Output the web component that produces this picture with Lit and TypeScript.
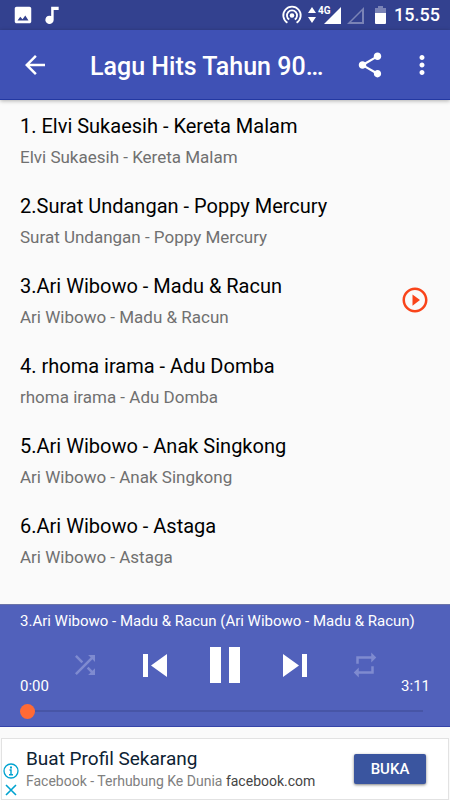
import { LitElement, html, css, svg, nothing } from "lit";
import { customElement, property, state } from "lit/decorators.js";

interface Song {
  title: string;
  artist: string;
}

const SONGS: Song[] = [
  { title: "1. Elvi Sukaesih - Kereta Malam", artist: "Elvi Sukaesih - Kereta Malam" },
  { title: "2.Surat Undangan - Poppy Mercury", artist: "Surat Undangan - Poppy Mercury" },
  { title: "3.Ari Wibowo - Madu & Racun", artist: "Ari Wibowo - Madu & Racun" },
  { title: "4. rhoma irama - Adu Domba", artist: "rhoma irama - Adu Domba" },
  { title: "5.Ari Wibowo - Anak Singkong", artist: "Ari Wibowo - Anak Singkong" },
  { title: "6.Ari Wibowo - Astaga", artist: "Ari Wibowo - Astaga" },
];

const reset = css`
  :host,
  * {
    box-sizing: border-box;
  }
  svg {
    display: block;
    fill: currentColor;
    flex: none;
  }
  button {
    display: flex;
    align-items: center;
    justify-content: center;
    padding: 0;
    margin: 0;
    border: 0;
    background: none;
    color: inherit;
    font: inherit;
    cursor: pointer;
  }
`;

const icon = (d: string) =>
  html`<svg width="30" height="30" viewBox="0 0 24 24" aria-hidden="true">${svg`<path d=${d} />`}</svg>`;

@customElement("status-bar")
export class StatusBar extends LitElement {
  static styles = [
    reset,
    css`
      :host {
        display: flex;
        align-items: center;
        height: 30px;
        padding: 0 10px 0 12px;
        background: #33418f;
        color: #fff;
      }
      .left {
        display: flex;
        align-items: center;
        gap: 8px;
        flex: 1;
      }
      .right {
        display: flex;
        align-items: center;
      }
      .network {
        font: 700 10px/10px Roboto, sans-serif;
      }
      .dim {
        opacity: 0.35;
      }
      .clock {
        margin-left: 8px;
        font-size: 18px;
        font-weight: 500;
        line-height: 30px;
      }
    `,
  ];

  render() {
    return html`
      <div class="left">
        <svg width="22" height="22" viewBox="0 0 24 24" aria-hidden="true">
          <path
            d="M21 19V5c0-1.100-.9-2-2-2H5c-1.100 0-2 .9-2 2v14c0 1.100.9 2 2 2h14c1.100 0 2-.9 2-2zM6 18l3-4 2.500 2.500 3-4L18 18z"
          />
        </svg>
        <svg width="20" height="20" viewBox="0 0 24 24" aria-hidden="true">
          <path d="M11 2v11.200A5 5 0 1 0 14 18V6h6V2z" />
        </svg>
      </div>
      <div class="right">
        <svg width="22" height="22" viewBox="0 0 24 24" aria-hidden="true">
          <g fill="none" stroke="currentColor" stroke-width="2">
            <path d="M7 20.500a9.500 9.500 0 1 1 10 0M9 17a5.500 5.500 0 1 1 6 0" />
          </g>
          <circle cx="12" cy="12.500" r="2.500" />
        </svg>
        <svg width="44" height="20" viewBox="0 0 44 20" aria-hidden="true">
          <path d="M9 2l4 6H5zM9 18l4-6H5zM21 19L38 2v17z" />
          <text class="network" x="15" y="9">4G</text>
        </svg>
        <svg class="dim" width="18" height="20" viewBox="0 0 18 20" aria-hidden="true">
          <path d="M0 19L17 2v17zM4 17h11V6z" fill-rule="evenodd" />
        </svg>
        <svg width="21" height="20" viewBox="0 0 21 20" aria-hidden="true">
          <path class="dim" d="M13 1h5v2h3v5H10V3h3z" />
          <path d="M10 8h11v10q0 1-1 1h-9q-1 0-1-1z" />
        </svg>
        <span class="clock">15.55</span>
      </div>
    `;
  }
}

@customElement("app-bar")
export class AppBar extends LitElement {
  @property() heading = "";

  static styles = [
    reset,
    css`
      :host {
        display: flex;
        align-items: center;
        height: 70px;
        padding: 0 8px 0 10px;
        background: #3f51b5;
        border-bottom: 1px solid #2338a2;
        box-shadow: 0 1px 4px rgba(0, 0, 0, 0.3);
        color: #fff;
        position: relative;
      }
      button {
        width: 50px;
        height: 50px;
      }
      .more {
        width: 40px;
        margin-left: 7px;
      }
      h1 {
        flex: 1;
        min-width: 0;
        margin: 0 16px 0 30px;
        padding-top: 4px;
        font-size: 25px;
        font-weight: 500;
        line-height: 32px;
        white-space: nowrap;
        overflow: hidden;
        text-overflow: ellipsis;
      }
    `,
  ];

  render() {
    return html`
      <button aria-label="Kembali">
        ${icon("M20 11H7.830l5.590-5.590L12 4l-8 8 8 8 1.410-1.410L7.830 13H20v-2z")}
      </button>
      <h1>${this.heading}</h1>
      <button aria-label="Bagikan">
        ${icon(
          "M18 16.080c-.76 0-1.440.3-1.960.77L8.910 12.700c.05-.23.09-.46.09-.7s-.04-.47-.09-.7l7.050-4.110c.54.5 1.250.81 2.040.81 1.660 0 3-1.340 3-3s-1.340-3-3-3-3 1.340-3 3c0 .24.04.47.09.7L8.040 9.810C7.500 9.310 6.790 9 6 9c-1.660 0-3 1.340-3 3s1.340 3 3 3c.79 0 1.500-.31 2.040-.81l7.120 4.160c-.05.21-.08.43-.08.65 0 1.610 1.310 2.920 2.920 2.920s2.920-1.310 2.920-2.920-1.310-2.920-2.920-2.920z"
        )}
      </button>
      <button class="more" aria-label="Menu">
        ${icon(
          "M12 8c1.100 0 2-.9 2-2s-.9-2-2-2-2 .9-2 2 .9 2 2 2zm0 2c-1.100 0-2 .9-2 2s.9 2 2 2 2-.9 2-2-.9-2-2-2zm0 6c-1.100 0-2 .9-2 2s.9 2 2 2 2-.9 2-2-.9-2-2-2z"
        )}
      </button>
    `;
  }
}

@customElement("song-list")
export class SongList extends LitElement {
  @property({ attribute: false }) songs: Song[] = [];
  @property({ type: Number }) current = -1;

  static styles = [
    reset,
    css`
      :host {
        display: block;
      }
      ul {
        list-style: none;
        margin: 0;
        padding: 0;
      }
      li {
        display: flex;
        align-items: center;
        height: 80px;
        padding: 0 20px;
      }
      .text {
        flex: 1;
        min-width: 0;
        padding-top: 2px;
      }
      .title,
      .artist {
        margin: 0;
        white-space: nowrap;
        overflow: hidden;
        text-overflow: ellipsis;
      }
      .title {
        font-size: 20px;
        line-height: 32px;
        color: #000;
      }
      .artist {
        font-size: 17px;
        line-height: 30px;
        color: #707070;
      }
      .playing {
        color: #f9441a;
      }
    `,
  ];

  render() {
    return html`
      <ul>
        ${this.songs.map(
          (song, i) => html`
            <li>
              <div class="text">
                <p class="title">${song.title}</p>
                <p class="artist">${song.artist}</p>
              </div>
              ${i === this.current
                ? html`<button class="playing" aria-label="Sedang diputar">
                    ${icon(
                      "M10 16.500l6-4.500-6-4.500v9zM12 2C6.480 2 2 6.480 2 12s4.480 10 10 10 10-4.480 10-10S17.520 2 12 2zm0 18c-4.410 0-8-3.590-8-8s3.590-8 8-8 8 3.590 8 8-3.590 8-8 8z"
                    )}
                  </button>`
                : nothing}
            </li>
          `
        )}
      </ul>
    `;
  }
}

@customElement("music-player")
export class MusicPlayer extends LitElement {
  @property() track = "";
  @state() private position = 0;

  static styles = [
    reset,
    css`
      :host {
        display: block;
        height: 123px;
        background: #5161bb;
        border-top: 1px solid #6c74a8;
        border-bottom: 1px solid #3544a8;
        color: #fff;
      }
      .track {
        margin: 0;
        padding: 4px 20px 0;
        font-size: 15px;
        line-height: 24px;
        white-space: nowrap;
        overflow: hidden;
        text-overflow: ellipsis;
      }
      .row {
        display: grid;
        grid-template-columns: 1fr auto 1fr;
        align-items: end;
        height: 64px;
        padding: 0 20px;
      }
      .time {
        width: 0;
        font-size: 15px;
        line-height: 22px;
      }
      .total {
        display: flex;
        justify-content: flex-end;
        justify-self: end;
      }
      .controls {
        display: flex;
        height: 64px;
      }
      .controls button {
        width: 70px;
      }
      .off {
        color: #7f8bd0;
      }
      input {
        appearance: none;
        display: block;
        width: calc(100% - 40px);
        height: 28px;
        margin: 0 20px;
        background: none;
      }
      input::-webkit-slider-runnable-track {
        height: 15px;
        background: linear-gradient(#4755a6, #4755a6) center / calc(100% - 14px) 2px no-repeat;
      }
      input::-webkit-slider-thumb {
        appearance: none;
        width: 15px;
        height: 15px;
        border-radius: 50%;
        background: #ff6a35;
      }
    `,
  ];

  render() {
    return html`
      <p class="track">${this.track}</p>
      <div class="row">
        <span class="time">0:00</span>
        <div class="controls">
          <button class="off" aria-label="Acak">
            ${icon(
              "M10.590 9.170L5.410 4 4 5.410l5.170 5.170 1.420-1.410zM14.500 4l2.040 2.040L4 18.590 5.410 20 17.960 7.460 20 9.500V4h-5.500zm.33 9.410l-1.410 1.410 3.130 3.130L14.500 20H20v-5.500l-2.040 2.040-3.130-3.130z"
            )}
          </button>
          <button aria-label="Sebelumnya">
            <svg width="24" height="24" viewBox="0 0 24 24" aria-hidden="true">
              <path d="M0 1h5v23H0zM24 1v23L8 12.500z" />
            </svg>
          </button>
          <button aria-label="Jeda">
            <svg width="32" height="36" viewBox="0 0 32 36" aria-hidden="true">
              <path d="M1 0h11v36H1zM20 0h11v36H20z" />
            </svg>
          </button>
          <button aria-label="Berikutnya">
            <svg width="24" height="24" viewBox="0 0 24 24" aria-hidden="true">
              <path d="M0 1v23l16-11.500zM19 1h5v23h-5z" />
            </svg>
          </button>
          <button class="off" aria-label="Ulangi">
            ${icon("M7 7h10v3l4-4-4-4v3H5v6h2V7zm10 10H7v-3l-4 4 4 4v-3h12v-6h-2v4z")}
          </button>
        </div>
        <span class="time total">3:11</span>
      </div>
      <input
        type="range"
        min="0"
        max="191"
        aria-label="Posisi lagu"
        .value=${String(this.position)}
      />
    `;
  }
}

@customElement("ad-banner")
export class AdBanner extends LitElement {
  static styles = [
    reset,
    css`
      :host {
        display: flex;
        align-items: center;
        height: 62px;
        margin: 0 1px;
        padding-right: 22px;
        background: #fff;
        border: 1px solid #e2e2e2;
      }
      .marks {
        display: flex;
        flex-direction: column;
        align-self: flex-end;
        width: 24px;
        color: #00a3d0;
      }
      .marks button {
        width: 18px;
        height: 19px;
      }
      .marks svg {
        fill: none;
        stroke: currentColor;
      }
      .text {
        flex: 1;
        min-width: 0;
        white-space: nowrap;
      }
      h2 {
        margin: 0;
        font-size: 19px;
        font-weight: 400;
        line-height: 24px;
        color: #0d2233;
        -webkit-text-stroke: 0;
      }
      p {
        margin: 0;
        font-size: 14px;
        line-height: 20px;
        color: #808080;
      }
      a {
        color: #444;
        text-decoration: none;
      }
      .open {
        width: 72px;
        height: 30px;
        border-radius: 2px;
        background: #3a559f;
        box-shadow: 0 1px 3px rgba(0, 0, 0, 0.5);
        color: #fff;
        font-size: 15px;
        font-weight: 500;
      }
    `,
  ];

  render() {
    return html`
      <div class="marks">
        <button aria-label="Info iklan">
          <svg width="16" height="16" viewBox="0 0 16 16" aria-hidden="true">
            <circle cx="8" cy="8" r="7" stroke-width="1.300" />
            <path d="M8 3.500v2" stroke-width="2" />
            <path d="M6.500 7H8v4.500M6 11.700h4" stroke-width="1.400" />
          </svg>
        </button>
        <button aria-label="Tutup iklan">
          <svg width="16" height="16" viewBox="0 0 16 16" aria-hidden="true">
            <path d="M3 3l10 10M13 3L3 13" stroke-width="1.600" />
          </svg>
        </button>
      </div>
      <div class="text">
        <h2>Buat Profil Sekarang</h2>
        <p>Facebook - Terhubung Ke Dunia <a href="#">facebook.com</a></p>
      </div>
      <button class="open">BUKA</button>
    `;
  }
}

@customElement("app-root")
export class AppRoot extends LitElement {
  static styles = css`
    :host {
      display: flex;
      flex-direction: column;
      min-height: 100vh;
      background: #fafafa;
      font-family: Roboto, sans-serif;
    }
    song-list {
      flex: 1;
      padding-bottom: 24px;
    }
    ad-banner {
      margin-top: 11px;
    }
  `;

  render() {
    return html`
      <status-bar></status-bar>
      <app-bar heading="Lagu Hits Tahun 90…"></app-bar>
      <song-list .songs=${SONGS} .current=${2}></song-list>
      <music-player track="3.Ari Wibowo - Madu & Racun (Ari Wibowo - Madu & Racun)"></music-player>
      <ad-banner></ad-banner>
    `;
  }
}
